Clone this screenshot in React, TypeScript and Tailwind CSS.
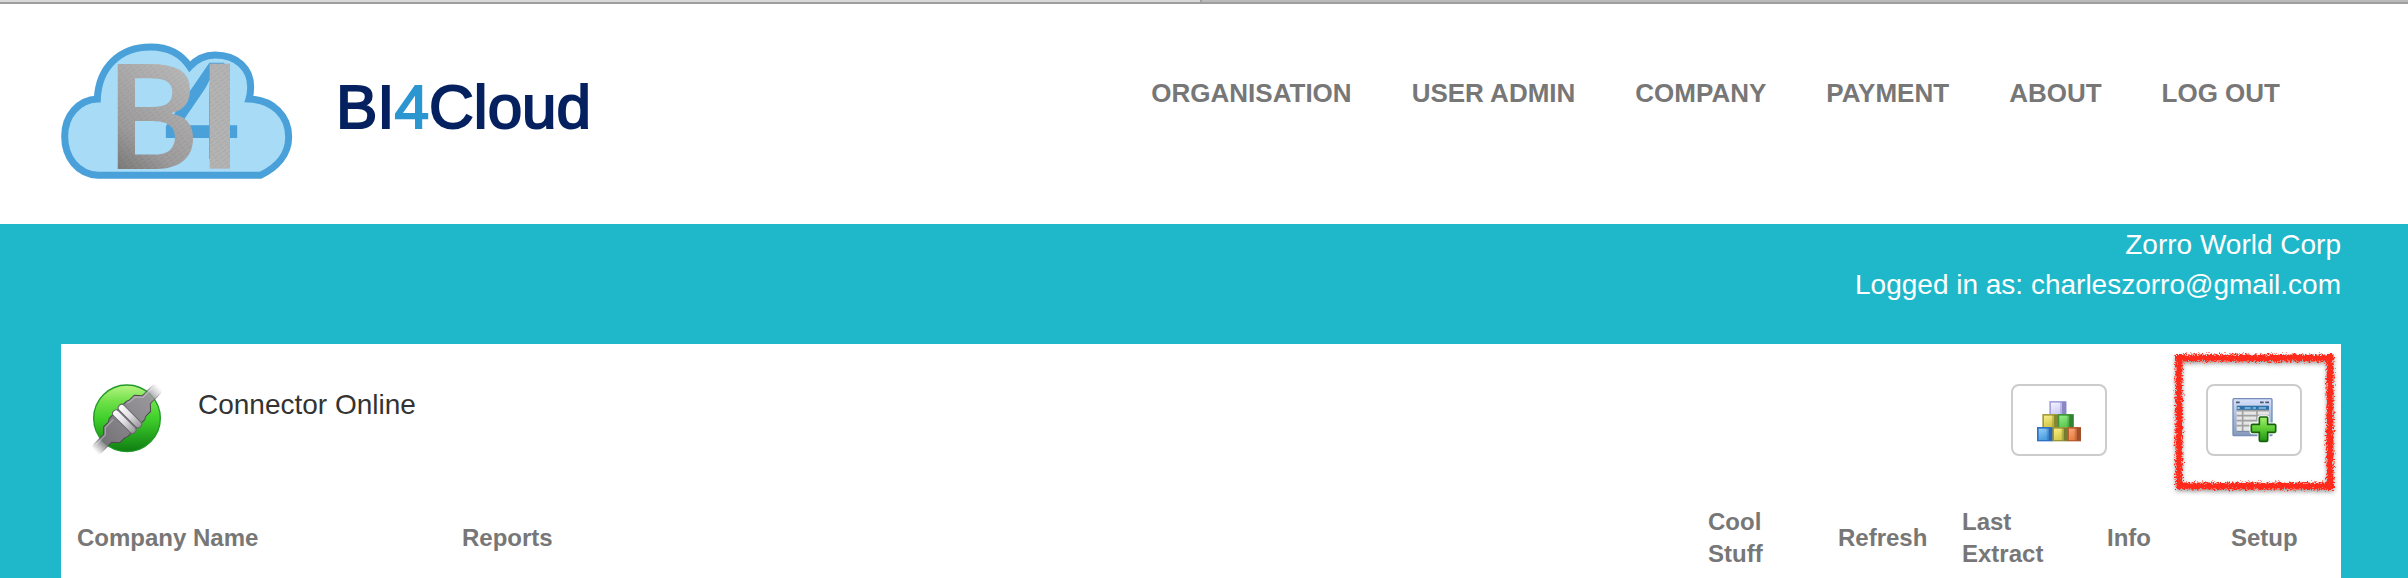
const navItems = ['Organisation', 'User Admin', 'Company', 'Payment', 'About', 'Log Out']

const columns = [
	{ name: 'Company Name', width: 'w-[385px]' },
	{ name: 'Reports', width: '' },
	{ name: 'Cool Stuff', width: 'w-[130px]' },
	{ name: 'Refresh', width: 'w-[124px]' },
	{ name: 'Last Extract', width: 'w-[145px]' },
	{ name: 'Info', width: 'w-[124px]' },
	{ name: 'Setup', width: 'w-[126px]' },
]

const CloudLogo = () => (
	<svg className="w-[231px] h-[136px] shrink-0 overflow-visible" viewBox="63 70 693 408" aria-hidden="true">
		<defs>
			<linearGradient id="metal" x1="0" y1="1" x2="0.6" y2="0">
				<stop offset="0" stopColor="#6f6c6c" />
				<stop offset="0.35" stopColor="#979595" />
				<stop offset="1" stopColor="#b3b2b2" />
			</linearGradient>
			<pattern id="brush" width="17" height="11" patternUnits="userSpaceOnUse" patternTransform="rotate(-36)">
				<path d="M0 2h17M0 8h11" stroke="#fff" strokeOpacity="0.16" strokeWidth="2" />
				<path d="M3 5h14" stroke="#555" strokeOpacity="0.14" strokeWidth="2" />
			</pattern>
			<pattern id="brushedMetal" x="220" y="120" width="260" height="340" patternUnits="userSpaceOnUse">
				<rect width="260" height="340" fill="url(#metal)" />
				<rect width="260" height="340" fill="url(#brush)" />
			</pattern>
		</defs>
		<path
			d="M172 238C176 142 240 82 332 82C386 82 426 106 449 141C470 118 494 106 525 106C591 106 632 147 632 202C632 216 630 228 627 238C698 240 746 288 746 352C746 405 710 444 661 467H174C112 463 74 413 74 350C74 288 116 240 172 238Z"
			fill="#a8dbf6"
			stroke="#4aa1d9"
			strokeWidth="21"
		/>
		<g fontFamily="'Open Sans', sans-serif" fontWeight="600">
			<text x="370" y="418" fontSize="400" fill="#4aa1d9">4</text>
			<rect x="509" y="132" width="61" height="315" fill="#b0afaf" />
			<rect x="509" y="132" width="61" height="315" fill="url(#brush)" />
			<text x="192" y="447" fontSize="441" fill="url(#brushedMetal)">B</text>
		</g>
	</svg>
)

const ConnectorIcon = () => (
	<svg className="w-[70px] h-[70px] shrink-0" viewBox="36 42 210 210" aria-hidden="true">
		<defs>
			<linearGradient id="green" x1="0" y1="0" x2="0" y2="1">
				<stop offset="0" stopColor="#b9f585" />
				<stop offset="0.25" stopColor="#6fe048" />
				<stop offset="0.5" stopColor="#3fd02b" />
				<stop offset="1" stopColor="#0f7d12" />
			</linearGradient>
			<linearGradient id="plug" gradientUnits="userSpaceOnUse" x1="-136" y1="0" x2="136" y2="0">
				<stop offset="0" stopColor="#77757a" stopOpacity="0" />
				<stop offset="0.16" stopColor="#77757a" />
				<stop offset="0.5" stopColor="#88868b" />
				<stop offset="0.84" stopColor="#98969b" />
				<stop offset="1" stopColor="#aaa8ad" stopOpacity="0" />
			</linearGradient>
			<linearGradient id="edge" gradientUnits="userSpaceOnUse" x1="-130" y1="0" x2="130" y2="0">
				<stop offset="0" stopColor="#4a494d" stopOpacity="0" />
				<stop offset="0.2" stopColor="#4a494d" />
				<stop offset="0.8" stopColor="#4a494d" />
				<stop offset="1" stopColor="#4a494d" stopOpacity="0" />
			</linearGradient>
			<linearGradient id="rib" x1="0" y1="0" x2="0" y2="1">
				<stop offset="0" stopColor="#fff" />
				<stop offset="0.5" stopColor="#dedde0" />
				<stop offset="1" stopColor="#97959b" />
			</linearGradient>
		</defs>
		<circle cx="141" cy="145" r="100" fill="url(#green)" stroke="#1f9a26" strokeWidth="4" />
		<g transform="translate(141 147) rotate(-45)">
			<path
				d="M-138 -17H-82L-66 -33H-46L-36 -39H36L46 -35H66L82 -17H138V17H82L66 34H46L36 39H-36L-46 35H-66L-82 17H-138Z"
				fill="url(#plug)"
				stroke="url(#edge)"
				strokeWidth="3"
			/>
			<path d="M-120 -12H-80L-64 -28H-30M34 -33L46 -30H64L80 -12H120" fill="none" stroke="#fff" strokeOpacity="0.3" strokeWidth="4" />
			<rect x="-22" y="-45" width="21" height="90" rx="10" fill="url(#rib)" stroke="#68666c" strokeWidth="3" />
			<rect x="2" y="-45" width="21" height="90" rx="10" fill="url(#rib)" stroke="#68666c" strokeWidth="3" />
		</g>
	</svg>
)

const blocks = [
	{ x: 208, y: 124, w: 51, light: '#f4f3ff', dark: '#cfccf8', side: '#7e7ab8', edge: '#a5a2df' },
	{ x: 187, y: 163, w: 48, light: '#f7ef8c', dark: '#d2c848', side: '#7d7b2c', edge: '#a39e3d' },
	{ x: 233, y: 163, w: 48, light: '#96ec87', dark: '#5ec953', side: '#2b7a2c', edge: '#3e963b' },
	{ x: 171, y: 202, w: 48, light: '#91cdf7', dark: '#4b9fe2', side: '#2b62ac', edge: '#2d70c4' },
	{ x: 217, y: 202, w: 47, light: '#f9ee7d', dark: '#d4cb50', side: '#69702b', edge: '#9a963a' },
	{ x: 262, y: 202, w: 41, light: '#fba777', dark: '#e98145', side: '#964a28', edge: '#b85f33' },
]

const BlocksIcon = () => (
	<svg className="w-[46px] h-[43px]" viewBox="168 118 138 129" aria-hidden="true">
		<defs>
			{blocks.map((b, i) => (
				<linearGradient key={i} id={`block${i}`} x1="0" y1="0" x2="0.4" y2="1">
					<stop offset="0" stopColor={b.light} />
					<stop offset="1" stopColor={b.dark} />
				</linearGradient>
			))}
		</defs>
		{blocks.map((b, i) => (
			<g key={i}>
				<rect x={b.x} y={b.y} width={b.w} height="43" fill={b.edge} />
				<rect x={b.x + 5} y={b.y + 5} width={b.w - 18} height="34" fill={`url(#block${i})`} />
				<rect x={b.x + b.w - 19} y={b.y + 3} width="8" height="37" fill={b.side} opacity="0.35" />
				<rect x={b.x + b.w - 12} y={b.y + 3} width="12" height="38" fill={b.side} opacity="0.7" />
			</g>
		))}
	</svg>
)

const TableAddIcon = () => (
	<svg className="w-[45px] h-[46px]" viewBox="215 156 135 138" aria-hidden="true">
		<defs>
			<linearGradient id="frame" x1="0" y1="0" x2="0" y2="1">
				<stop offset="0" stopColor="#d7e1fb" />
				<stop offset="0.5" stopColor="#a9b9dd" />
				<stop offset="1" stopColor="#8799b8" />
			</linearGradient>
			<linearGradient id="plus" x1="0" y1="0" x2="0" y2="1">
				<stop offset="0" stopColor="#a4ef70" />
				<stop offset="0.45" stopColor="#62cf38" />
				<stop offset="1" stopColor="#1f9413" />
			</linearGradient>
		</defs>
		<rect x="218" y="161" width="117" height="111" rx="3" fill="url(#frame)" stroke="#748db9" strokeWidth="4" />
		<path d="M227 172h11M299 172h11M315 172h11" stroke="#4c5872" strokeWidth="5" />
		<rect x="229" y="182" width="97" height="77" fill="#e6e6e6" />
		<rect x="229" y="182" width="97" height="14" fill="#2d70a9" />
		<path d="M253 189h18M277 189h10M295 189h22" stroke="#75add5" strokeWidth="6" />
		<path d="M231 189h7" stroke="#9dc8e6" strokeWidth="6" />
		<path d="M229 197h97M229 212h97M229 227h97M229 242h97M247 196v63M290 196v30" stroke="#a0a0a0" strokeWidth="5" />
		<path d="M229 259h97" stroke="#71849f" strokeWidth="3" />
		<path
			d="M300 216h19q3 0 3 3v19h21q3 0 3 3v18q0 3-3 3h-21v24q0 3-3 3h-19q-3 0-3-3v-24h-21q-3 0-3-3v-18q0-3 3-3h21v-19q0-3 3-3z"
			fill="none"
			stroke="#fff"
			strokeWidth="11"
		/>
		<path
			d="M300 216h19q3 0 3 3v19h21q3 0 3 3v18q0 3-3 3h-21v24q0 3-3 3h-19q-3 0-3-3v-24h-21q-3 0-3-3v-18q0-3 3-3h21v-19q0-3 3-3z"
			fill="url(#plus)"
			stroke="#17600f"
			strokeWidth="5"
		/>
	</svg>
)

// Rough crayon outline around the setup button
const Highlight = () => (
	<svg
		className="absolute -top-[37px] -left-[37px] w-[172px] h-[152px] max-w-none pointer-events-none"
		viewBox="0 0 172 152"
		aria-hidden="true"
	>
		<defs>
			<filter id="crayon" x="0" y="0" width="172" height="152" filterUnits="userSpaceOnUse">
				<feTurbulence type="fractalNoise" baseFrequency="0.6" numOctaves="2" seed="4" result="noise" />
				<feDisplacementMap in="SourceGraphic" in2="noise" scale="8" xChannelSelector="R" yChannelSelector="G" result="rough" />
				<feDropShadow in="rough" dx="0" dy="2" stdDeviation="2" floodColor="#000" floodOpacity="0.4" />
			</filter>
		</defs>
		<path
			d="M6 11H164M10 7V141M161 7V143M8 139H165"
			fill="none"
			stroke="#ff2a1a"
			strokeWidth="7"
			filter="url(#crayon)"
		/>
	</svg>
)

const buttonClass =
	'flex items-center justify-center w-24 h-[72px] bg-white border-2 border-[#ccc] rounded-lg cursor-pointer'

const App = () => {
	return (
		<div className="min-h-screen flex flex-col bg-white font-['Liberation_Sans',Arial,sans-serif]">
			{/* Window edge */}
			<div className="flex h-1 border-b-2 border-[#9e9e9e]">
				<div className="w-[49.9%] bg-[#d8d8d8] border-r-2 border-[#9e9e9e]" />
				<div className="flex-1 bg-[#bababa]" />
			</div>

			<header className="flex items-start justify-between h-[220px] pl-[61px] pr-32">
				<a href="#" className="flex items-center gap-11 pt-[39px]">
					<CloudLogo />
					<span className="pb-2 text-[62px] leading-[68px] text-[#05215f] [-webkit-text-stroke:2px]">
						BI<span className="text-[#2b96d0]">4</span>Cloud
					</span>
				</a>
				<nav className="flex gap-[60px] pt-[69px]">
					{navItems.map((item) => (
						<a key={item} href="#" className="text-[26px] leading-10 font-bold uppercase text-[#777]">
							{item}
						</a>
					))}
				</nav>
			</header>

			<main className="flex-1 flex flex-col bg-[#1fb8ca] pl-[61px] pr-[67px]">
				<div className="h-[120px] pt-px text-right text-[28px] leading-10 text-white">
					<p>Zorro World Corp</p>
					<p>Logged in as: charleszorro@gmail.com</p>
				</div>

				<section className="flex-1 bg-white pt-10">
					<div className="flex items-start pl-[31px] pr-[39px]">
						<ConnectorIcon />
						<p className="ml-9 pt-px text-[28px] leading-10 text-[#333]">Connector Online</p>
						<div className="ml-auto flex gap-[99px]">
							<button type="button" aria-label="Cool stuff" className={buttonClass}>
								<BlocksIcon />
							</button>
							<div className="relative">
								<button type="button" aria-label="Setup" className={buttonClass}>
									<TableAddIcon />
								</button>
								<Highlight />
							</div>
						</div>
					</div>

					<table className="w-full table-fixed mt-[50px] text-left text-2xl leading-8 text-[#777]">
						<thead>
							<tr>
								{columns.map((col) => (
									<th key={col.name} scope="col" className={`${col.width} pl-4 pr-2 pb-2 align-middle font-bold`}>
										{col.name}
									</th>
								))}
							</tr>
						</thead>
					</table>
				</section>
			</main>
		</div>
	)
}

export default App
